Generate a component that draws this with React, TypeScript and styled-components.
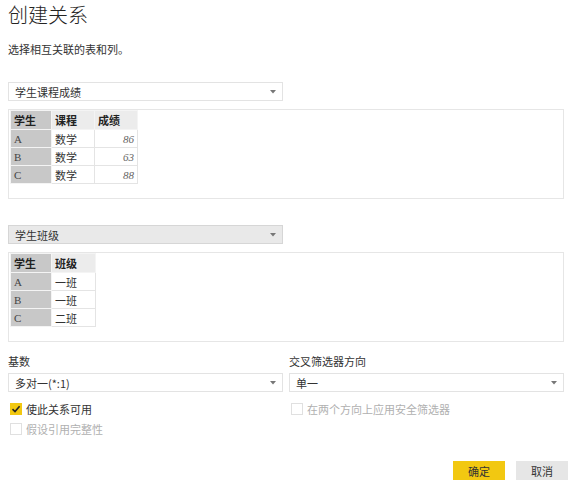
import React from "react";
import styled, { createGlobalStyle } from "styled-components";

const GlobalStyle = createGlobalStyle`
  body {
    margin: 0;
    background: #ffffff;
    font-family: "Noto Sans CJK SC", "Noto Sans", sans-serif;
    color: #252423;
  }
`;

const Dialog = styled.div`
  width: 576px;
  height: 484px;
  box-sizing: border-box;
  padding: 0 8px;
  background: #fff;
`;

const Title = styled.h1`
  margin: 0;
  padding-top: 1px;
  font-size: 20px;
  font-weight: 300;
  line-height: 28px;
  color: #252423;
`;

const Subtitle = styled.div`
  margin-top: 13px;
  font-size: 11px;
  line-height: 14px;
  color: #333;
`;

const TableSection = styled.div`
  margin-top: 26px;
`;

const SelectBox = styled.div<{ active?: boolean }>`
  width: 275px;
  height: 19px;
  box-sizing: border-box;
  display: flex;
  align-items: center;
  justify-content: space-between;
  padding: 0 6px;
  border: 1px solid ${({ active }) => (active ? "#d6d6d6" : "#e3e3e3")};
  background: ${({ active }) => (active ? "#e9e9e9" : "#ffffff")};
  font-size: 11px;
  color: #333;
`;

const Arrow = () => (
  <svg width="6" height="4" viewBox="0 0 6 4">
    <path d="M0 0 L6 0 L3 3.5 Z" fill="#777" />
  </svg>
);

const Preview = styled.div`
  margin-top: 8px;
  width: 556px;
  height: 90px;
  box-sizing: border-box;
  border: 1px solid #e6e6e6;
  padding: 0 0 0 1px;
`;

const DataTable = styled.table`
  border-collapse: collapse;
  font-family: "Liberation Serif", "Noto Sans CJK SC", serif;
  font-size: 11px;
  color: #333;
`;

const HeadCell = styled.th<{ $key?: boolean; $w: number }>`
  width: ${({ $w }) => $w}px;
  height: 19px;
  box-sizing: border-box;
  padding: 0 3px;
  text-align: left;
  font-weight: 700;
  background: ${({ $key }) => ($key ? "#c8c8c8" : "#ececec")};
  border: 1px solid #f4f4f4;
  color: #222;
`;

const Cell = styled.td<{ $key?: boolean; $num?: boolean }>`
  height: 18px;
  box-sizing: border-box;
  padding: 0 3px;
  text-align: ${({ $num }) => ($num ? "right" : "left")};
  font-style: ${({ $num }) => ($num ? "italic" : "normal")};
  color: ${({ $num, $key }) => ($num ? "#666" : $key ? "#444" : "#333")};
  background: ${({ $key }) => ($key ? "#c8c8c8" : "#ffffff")};
  border: 1px solid ${({ $key }) => ($key ? "#f4f4f4" : "#e4e4e4")};
`;

const Options = styled.div`
  margin-top: 12px;
  display: grid;
  grid-template-columns: 275px 275px;
  column-gap: 6px;
`;

const Column = styled.div`
  display: flex;
  flex-direction: column;
`;

const Label = styled.div`
  font-size: 11px;
  line-height: 14px;
  color: #333;
`;

const FieldSelect = styled(SelectBox)`
  margin-top: 5px;
`;

const CheckRow = styled.div<{ disabled?: boolean; first?: boolean }>`
  display: flex;
  align-items: center;
  gap: 4px;
  height: 16px;
  margin-top: ${({ first }) => (first ? "9px" : "4px")};
  padding-left: 2px;
  font-size: 11px;
  color: ${({ disabled }) => (disabled ? "#b0b0b0" : "#333")};
`;

const Box = styled.span<{ checked?: boolean }>`
  width: 12px;
  height: 12px;
  box-sizing: border-box;
  display: inline-flex;
  align-items: center;
  justify-content: center;
  background: ${({ checked }) => (checked ? "#f2c811" : "#fff")};
  border: 1px solid ${({ checked }) => (checked ? "#f2c811" : "#e0e0e0")};
`;

const Check = () => (
  <svg width="10" height="10" viewBox="0 0 10 10">
    <path d="M1.5 5.2 L4 7.6 L8.6 2.2" fill="none" stroke="#252423" strokeWidth="1.6" />
  </svg>
);

const Footer = styled.div`
  margin-top: 24px;
  display: flex;
  justify-content: flex-end;
  gap: 11px;
`;

const Button = styled.button<{ primary?: boolean }>`
  width: 52px;
  height: 19px;
  border: none;
  padding: 0;
  font-family: inherit;
  font-size: 11px;
  color: #333;
  background: ${({ primary }) => (primary ? "#f2c811" : "#e6e6e6")};
`;

const gradeRows = [
  ["A", "数学", "86"],
  ["B", "数学", "63"],
  ["C", "数学", "88"],
];

const classRows = [
  ["A", "一班"],
  ["B", "一班"],
  ["C", "二班"],
];

export default function App() {
  return (
    <Dialog>
      <GlobalStyle />
      <Title>创建关系</Title>
      <Subtitle>选择相互关联的表和列。</Subtitle>

      <TableSection>
        <SelectBox>
          <span>学生课程成绩</span>
          <Arrow />
        </SelectBox>
        <Preview>
          <DataTable>
            <thead>
              <tr>
                <HeadCell $key $w={41}>学生</HeadCell>
                <HeadCell $w={43}>课程</HeadCell>
                <HeadCell $w={43}>成绩</HeadCell>
              </tr>
            </thead>
            <tbody>
              {gradeRows.map((r) => (
                <tr key={r[0]}>
                  <Cell $key>{r[0]}</Cell>
                  <Cell>{r[1]}</Cell>
                  <Cell $num>{r[2]}</Cell>
                </tr>
              ))}
            </tbody>
          </DataTable>
        </Preview>
      </TableSection>

      <TableSection>
        <SelectBox active>
          <span>学生班级</span>
          <Arrow />
        </SelectBox>
        <Preview>
          <DataTable>
            <thead>
              <tr>
                <HeadCell $key $w={41}>学生</HeadCell>
                <HeadCell $w={44}>班级</HeadCell>
              </tr>
            </thead>
            <tbody>
              {classRows.map((r) => (
                <tr key={r[0]}>
                  <Cell $key>{r[0]}</Cell>
                  <Cell>{r[1]}</Cell>
                </tr>
              ))}
            </tbody>
          </DataTable>
        </Preview>
      </TableSection>

      <Options>
        <Column>
          <Label>基数</Label>
          <FieldSelect>
            <span>多对一(*:1)</span>
            <Arrow />
          </FieldSelect>
          <CheckRow first>
            <Box checked>
              <Check />
            </Box>
            使此关系可用
          </CheckRow>
          <CheckRow disabled>
            <Box />
            假设引用完整性
          </CheckRow>
        </Column>
        <Column>
          <Label>交叉筛选器方向</Label>
          <FieldSelect>
            <span>单一</span>
            <Arrow />
          </FieldSelect>
          <CheckRow first disabled>
            <Box />
            在两个方向上应用安全筛选器
          </CheckRow>
        </Column>
      </Options>

      <Footer>
        <Button primary>确定</Button>
        <Button>取消</Button>
      </Footer>
    </Dialog>
  );
}
